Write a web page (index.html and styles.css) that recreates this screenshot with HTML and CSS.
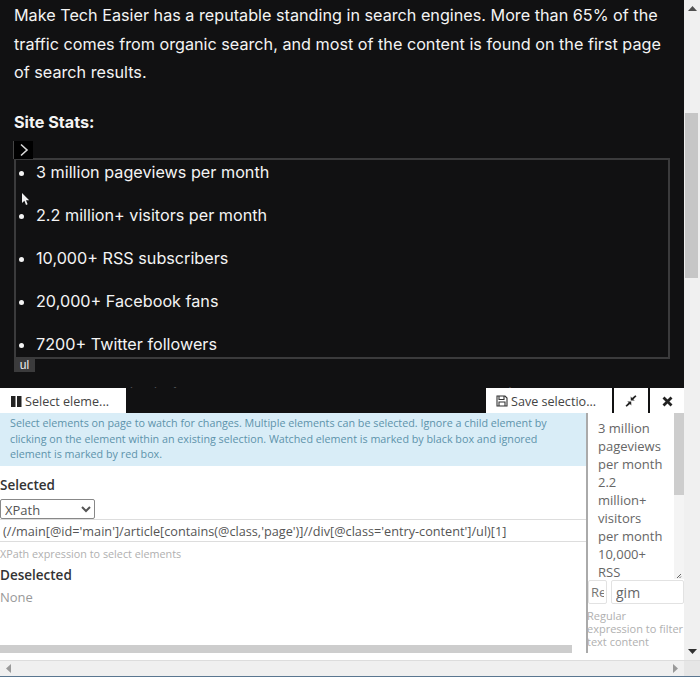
FILE: index.html
```html
<!DOCTYPE html>
<html>
<head>
  <link rel="stylesheet" href="styles.css">
</head>
<body>
<div class="window">
  <div class="window-body">
    <div class="page">
      <div class="site">
        <p class="site-text">Make Tech Easier has a reputable standing in search engines. More than 65% of the traffic comes from organic search, and most of the content is found on the first page of search results.</p>
        <p class="site-head">Site Stats:</p>
        <ul class="site-list">
          <li>3 million pageviews per month</li>
          <li>2.2 million+ visitors per month</li>
          <li>10,000+ RSS subscribers</li>
          <li>20,000+ Facebook fans</li>
          <li>7200+ Twitter followers</li>
        </ul>
        <p class="site-text">Make Tech Easier is followed across the web by an engaged audience.</p>
        <div class="hl-box"></div>
        <div class="hl-handle">
          <svg width="10" height="14" viewBox="0 0 10 14"><path d="M2 1.500 8 7 2 12.500" fill="none" stroke="#d8d8d8" stroke-width="1.600"/></svg>
        </div>
        <div class="hl-tag">ul</div>
        <svg class="cursor" width="9" height="13" viewBox="0 0 9 13"><path d="M1 0v10l2.400-2.200L5 12l1.600-.7L5 7.300h3.200z" fill="#f2f2f2"/></svg>
      </div>
      <div class="picker">
        <div class="picker-bar">
          <button class="bar-btn btn-select">
            <svg width="11" height="11" viewBox="0 0 11 11"><path d="M0 0h4.500v11H0zM6 0h4.500v11H6z" fill="#222"/></svg>
            Select eleme...
          </button>
          <div class="bar-fill"></div>
          <button class="bar-btn btn-save">
            <svg width="12" height="12" viewBox="0 0 12 12"><path d="M1 1h8l2 2v8H1zM3 1v3.500h5V1M3 11V7h6v4" fill="none" stroke="#333" stroke-width="1.100"/></svg>
            Save selectio...
          </button>
          <button class="bar-btn btn-icon">
            <svg width="12" height="12" viewBox="0 0 12 12"><path d="M11.500 1.200 8.300 4.400l1.500 1.200-4-.1-.1-3.900 1.300 1.400L10.300.2zM.5 10.800l3.200-3.200-1.500-1.200 4 .1.100 3.900-1.300-1.400-3.300 2.800z" fill="#222"/></svg>
          </button>
          <button class="bar-btn btn-icon">
            <svg width="11" height="11" viewBox="0 0 11 11"><path d="M1.500 1.500l8 8M9.500 1.500l-8 8" fill="none" stroke="#222" stroke-width="2.800"/></svg>
          </button>
        </div>
        <div class="picker-body">
          <div class="picker-main">
            <div class="info">Select elements on page to watch for changes. Multiple elements can be selected. Ignore a child element by clicking on the element within an existing selection. Watched element is marked by black box and ignored element is marked by red box.</div>
            <div class="form-label">Selected</div>
            <select class="type-select"><option>XPath</option></select>
            <input class="path-input" type="text" value="(//main[@id='main']/article[contains(@class,'page')]//div[@class='entry-content']/ul)[1]">
            <div class="hint">XPath expression to select elements</div>
            <div class="form-label label-deselected">Deselected</div>
            <div class="none-text">None</div>
            <div class="main-spacer"></div>
            <div class="inner-scroll"></div>
          </div>
          <div class="picker-side">
            <div class="preview">
              <div class="preview-text">3 million pageviews per month<br>2.2 million+ visitors per month<br>10,000+ RSS subscribers</div>
              <div class="preview-scroll"><div class="preview-thumb"></div></div>
              <svg class="grip" width="7" height="7" viewBox="0 0 7 7"><path d="M6 2 2 6M6 4.500 4.500 6" stroke="#666" fill="none"/></svg>
            </div>
            <div class="regex-row">
              <input class="regex-input input-re" type="text" placeholder="Regex">
              <input class="regex-input input-flags" type="text" value="gim">
            </div>
            <div class="side-hint">Regular<br>expression to filter<br>text content</div>
          </div>
        </div>
      </div>
    </div>
    <div class="vscroll">
      <svg width="9" height="5" viewBox="0 0 9 5"><path d="M4.500 0 9 5H0z" fill="#505050"/></svg>
      <div class="vscroll-track"><div class="vscroll-thumb"></div></div>
      <svg width="9" height="5" viewBox="0 0 9 5"><path d="M0 0h9L4.500 5z" fill="#303030"/></svg>
    </div>
  </div>
  <div class="hscroll">
    <svg width="5" height="9" viewBox="0 0 5 9"><path d="M5 0v9L0 4.500z" fill="#9a9a9a"/></svg>
    <div class="hscroll-fill"></div>
    <svg width="5" height="9" viewBox="0 0 5 9"><path d="M0 0v9l5-4.500z" fill="#9a9a9a"/></svg>
    <div class="hscroll-corner"></div>
  </div>
</div>
</body>
</html>
```

FILE: styles.css
```css
* {
  box-sizing: border-box;
}
html, body {
  margin: 0;
  height: 100%;
  overflow: hidden;
}
.window {
  width: 700px;
  height: 677px;
  display: flex;
  flex-direction: column;
  background: #f0f0f0;
}
.window-body {
  display: flex;
  height: 660px;
}
.page {
  width: 684px;
  flex-shrink: 0;
  display: flex;
  flex-direction: column;
}

/* dark site */
.site {
  position: relative;
  height: 388px;
  overflow: hidden;
  background: #111112;
  color: #f4f4f4;
  font-family: Inter, sans-serif;
  font-size: 16.2px;
  padding: 1px 14px 0;
}
.site-text {
  margin: 0;
  line-height: 28.500px;
}
.site-head {
  margin: 21px 0 0;
  font-weight: 700;
  line-height: 28px;
}
.site-list {
  margin: 22px 0 22px;
  padding: 0 0 0 22px;
  line-height: 28px;
}
.site-list li {
  margin-bottom: 15px;
}
.hl-box {
  position: absolute;
  left: 14px;
  top: 158px;
  width: 656px;
  height: 201px;
  border: 2px solid #3b3b3c;
}
.hl-handle {
  position: absolute;
  left: 13px;
  top: 141px;
  width: 20px;
  height: 18px;
  background: #000;
  border-left: 1px solid #444;
  display: flex;
  align-items: center;
  justify-content: center;
}
.hl-tag {
  position: absolute;
  left: 14px;
  top: 358px;
  width: 21px;
  height: 14px;
  background: #3b3b3c;
  color: #eee;
  font-family: "Liberation Sans", sans-serif;
  font-size: 12px;
  line-height: 14px;
  text-align: center;
}
.cursor {
  position: absolute;
  left: 21px;
  top: 193px;
}

/* picker panel */
.picker {
  flex: 1;
  display: flex;
  flex-direction: column;
  background: #fff;
  color: #555;
  font-family: "Open Sans", sans-serif;
  min-height: 0;
}
.picker-bar {
  display: flex;
  height: 25px;
  background: #111112;
}
.bar-fill {
  flex: 1;
}
.bar-btn {
  display: flex;
  align-items: center;
  justify-content: center;
  gap: 3px;
  height: 25px;
  padding: 1px 0 0;
  border: 0;
  background: #fff;
  color: #444;
  font-family: "Open Sans", sans-serif;
  font-size: 12.600px;
}
.btn-select {
  width: 126px;
  justify-content: flex-start;
  padding-left: 11px;
}
.btn-save {
  width: 126px;
  justify-content: flex-start;
  padding-left: 10px;
}
.btn-icon {
  width: 34px;
  margin-left: 2px;
}
.picker-body {
  flex: 1;
  display: flex;
  min-height: 0;
}
.picker-main {
  width: 586px;
  flex-shrink: 0;
  display: flex;
  flex-direction: column;
}
.info {
  height: 53px;
  padding: 3px 10px 0;
  background: #d9edf7;
  color: #5d93ab;
  font-size: 10.750px;
  line-height: 15.500px;
}
.form-label {
  margin-top: 10px;
  color: #333;
  font-size: 13.500px;
  font-weight: 600;
  line-height: 18px;
}
.type-select {
  width: 95px;
  height: 20px;
  margin-top: 5px;
  border: 1px solid #888;
  border-radius: 2px;
  background: #fff;
  color: #555;
  font-family: "Open Sans", sans-serif;
  font-size: 13px;
}
.path-input {
  height: 23px;
  width: 100%;
  padding: 0 3px;
  border: 0;
  border-top: 1px solid #ddd;
  border-bottom: 1px solid #ddd;
  color: #555;
  font-family: "Open Sans", sans-serif;
  font-size: 12.700px;
}
.hint {
  margin-top: 4px;
  color: #b0b0b0;
  font-size: 10.800px;
  line-height: 16px;
}
.label-deselected {
  margin-top: 4px;
}
.none-text {
  margin-top: 4px;
  color: #999;
  font-size: 13px;
  line-height: 18px;
}
.main-spacer {
  flex: 1;
}
.inner-scroll {
  width: 572px;
  height: 8px;
  margin-bottom: 7px;
  background: #cdcdcd;
}
.picker-side {
  width: 98px;
  flex-shrink: 0;
  display: flex;
  flex-direction: column;
  height: 240px;
  border-left: 2px solid #aaa;
}
.preview {
  position: relative;
  display: flex;
  height: 166px;
  overflow: hidden;
}
.preview-text {
  flex: 1;
  min-width: 0;
  padding: 6px 10px 0 10px;
  color: #666;
  font-size: 13px;
  line-height: 18px;
}
.preview-scroll {
  width: 10px;
  flex-shrink: 0;
  background: #f4f4f4;
}
.preview-thumb {
  height: 82px;
  background: #cdcdcd;
}
.grip {
  position: absolute;
  right: 2px;
  bottom: 0;
}
.regex-row {
  display: flex;
  gap: 4px;
  height: 24px;
  margin-top: 1px;
}
.regex-input {
  height: 24px;
  border: 1px solid #e2e2e2;
  border-radius: 2px;
  color: #666;
  font-family: "Open Sans", sans-serif;
  font-size: 14px;
  padding: 0 4px;
  min-width: 0;
}
.input-re {
  width: 19px;
  padding: 0 2px;
  font-size: 13px;
}
.input-flags {
  flex: 1;
}
.side-hint {
  margin: 5px 0 0 -1px;
  color: #b0b0b0;
  font-size: 11px;
  line-height: 13px;
  white-space: nowrap;
}

/* browser scrollbars */
.vscroll {
  width: 16px;
  display: flex;
  flex-direction: column;
  align-items: center;
  padding: 6px 0 6px;
  background: #f0f0f0;
}
.vscroll-track {
  flex: 1;
  width: 100%;
  padding: 102px 2px 0 1px;
}
.vscroll-thumb {
  height: 165px;
  background: #c6c6c6;
}
.hscroll {
  display: flex;
  align-items: center;
  height: 17px;
  padding: 0 0 0 6px;
  background: #f0f0f0;
  border-top: 1px solid #ddd;
  border-bottom: 1px solid #5a7690;
}
.hscroll-fill {
  flex: 1;
}
.hscroll-corner {
  width: 16px;
  height: 100%;
  margin-left: 6px;
  background: #e6e6e6;
}
```
